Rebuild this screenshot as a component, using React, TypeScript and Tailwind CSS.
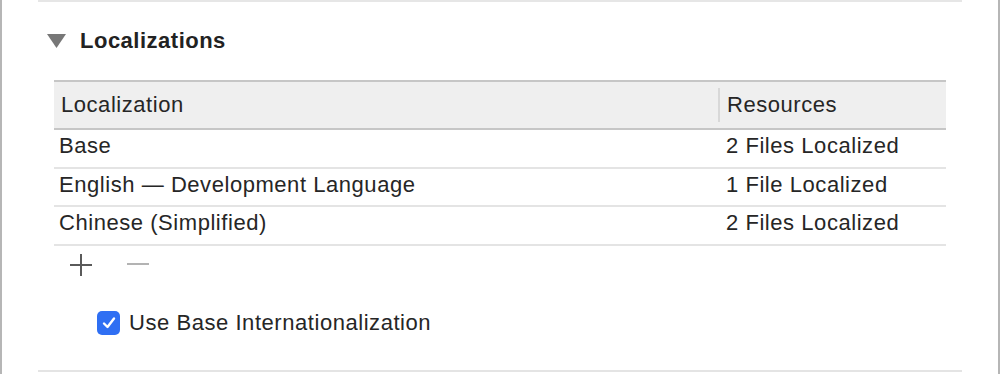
import React from "react";

const rows = [
  { name: "Base", res: "2 Files Localized", h: "h-[37px]" },
  { name: "English — Development Language", res: "1 File Localized", h: "h-[36px]" },
  { name: "Chinese (Simplified)", res: "2 Files Localized", h: "h-[37px]" },
];

export default function App() {
  return (
    <div className="w-[1000px] h-[374px] bg-white flex border-x-2 border-[#b6b6b6] font-['Liberation_Sans',Arial,sans-serif] text-[22px] leading-[26px] tracking-[0.55px] text-[#262626]">
      <div className="mx-[36px] flex-1 flex flex-col">
        <div className="h-[2px] bg-[#e6e6e6]" />
        <div className="flex items-center mt-[26px] h-[26px]">
          <svg className="ml-[9px]" width="19" height="14" viewBox="0 0 19 14">
            <polygon points="0,0 19,0 9.5,14" fill="#777777" />
          </svg>
          <span className="ml-[14px] font-bold tracking-[0.5px] text-[#222222]">Localizations</span>
        </div>
        <div className="mx-[16px] mt-[26px] flex flex-col">
          <div className="h-[50px] flex items-center border-y-2 border-[#c6c6c6] bg-[#efefef]">
            <div className="w-[664px] pl-[7px]">Localization</div>
            <div className="w-[2px] h-[34px] bg-[#d8d8d8]" />
            <div className="pl-[7px]">Resources</div>
          </div>
          {rows.map((r) => (
            <div key={r.name} className={`${r.h} box-content flex border-b-2 border-[#e4e4e4]`}>
              <div className="w-[666px] pl-[5px] pt-[3px]">{r.name}</div>
              <div className="pl-[6px] pt-[3px]">{r.res}</div>
            </div>
          ))}
        </div>
        <div className="mx-[16px] mt-[8px] pl-[16px] flex items-center h-[22px]">
          <svg width="22" height="22" viewBox="0 0 22 22">
            <path d="M11 0V22M0 11H22" stroke="#5a5a5a" strokeWidth="2" />
          </svg>
          <svg className="ml-[35px]" width="22" height="22" viewBox="0 0 22 22">
            <path d="M0 10H22" stroke="#b3b3b3" strokeWidth="2" />
          </svg>
        </div>
        <div className="mt-[34px] ml-[59px] flex items-center">
          <div className="w-[23px] h-[24px] rounded-[5px] bg-[#2f6ff3] flex items-center justify-center">
            <svg width="16" height="16" viewBox="0 0 16 16">
              <path d="M3 8.5L6.5 12L13 3.5" fill="none" stroke="white" strokeWidth="2.4" strokeLinecap="round" strokeLinejoin="round" />
            </svg>
          </div>
          <span className="ml-[9px]">Use Base Internationalization</span>
        </div>
        <div className="mt-auto h-[2px] bg-[#e4e4e4]" />
        <div className="h-[2px]" />
      </div>
    </div>
  );
}
